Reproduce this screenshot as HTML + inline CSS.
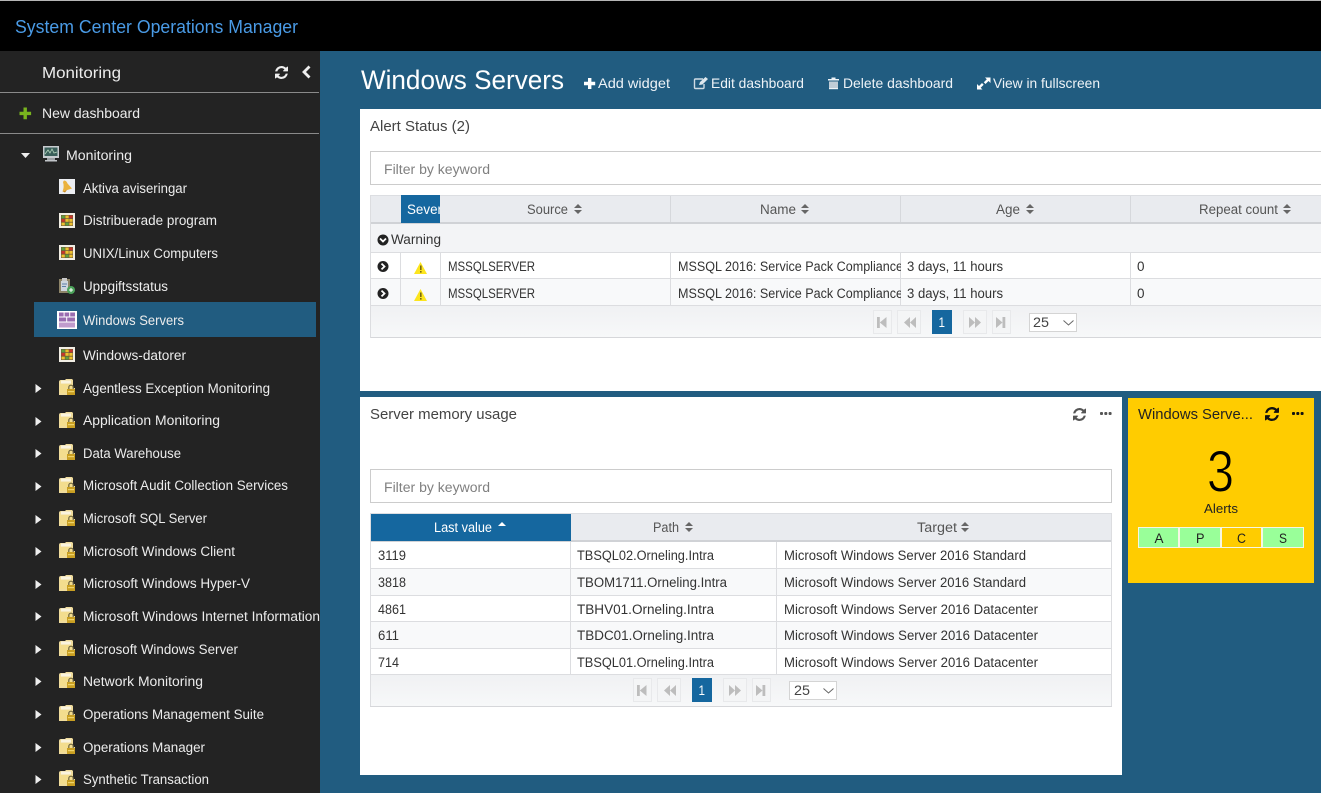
<!DOCTYPE html>
<html lang="en"><head><meta charset="utf-8"><title>System Center Operations Manager</title>
<style>
html,body{margin:0;padding:0;width:1321px;height:793px;overflow:hidden;background:#215c80}
svg{display:block}
text{font-family:"Liberation Sans",sans-serif;font-size:13.5px;fill:#333}
.s text{fill:#ececec}
.h text{fill:#555}
</style></head><body>
<svg xmlns="http://www.w3.org/2000/svg" width="1321" height="793" viewBox="0 0 1321 793">
<defs>
<symbol id="refresh" viewBox="0 0 1536 1536"><path d="M1511 928q0 5-1 7-64 268-268 434.5t-478 166.5q-146 0-282.5-55t-243.5-157l-129 129q-19 19-45 19t-45-19-19-45v-448q0-26 19-45t45-19h448q26 0 45 19t19 45-19 45l-137 137q71 66 161 102t187 36q134 0 250-65t186-179q11-17 53-117 8-23 30-23h192q13 0 22.5 9.5t9.5 22.5zm25-800v448q0 26-19 45t-45 19h-448q-26 0-45-19t-19-45 19-45l138-138q-148-137-349-137-134 0-250 65t-186 179q-11 17-53 117-8 23-30 23h-199q-13 0-22.5-9.5t-9.5-22.5v-7q65-268 270-434.5t480-166.5q146 0 284 55.5t245 156.5l130-129q19-19 45-19t45 19 19 45z"/></symbol>
<g id="grid"><rect x="0" y="0" width="16" height="15" fill="#f1eee4"/>
<rect x="2" y="2" width="12" height="11" fill="#6b5a3a"/>
<rect x="2.500" y="2.500" width="3.300" height="2.800" fill="#5fa03c"/><rect x="6.400" y="2.500" width="3.300" height="2.800" fill="#eec02f"/><rect x="10.300" y="2.500" width="3.300" height="2.800" fill="#c8352c"/>
<rect x="2.500" y="6" width="3.300" height="2.800" fill="#c8352c"/><rect x="6.400" y="6" width="3.300" height="2.800" fill="#eec02f"/><rect x="10.300" y="6" width="3.300" height="2.800" fill="#eec02f"/>
<rect x="2.500" y="9.600" width="3.300" height="2.800" fill="#eec02f"/><rect x="6.400" y="9.600" width="3.300" height="2.800" fill="#5fa03c"/><rect x="10.300" y="9.600" width="3.300" height="2.800" fill="#eec02f"/></g>
<g id="folder"><path d="M0 3Q0 1 2 1H6L7 0H13L14 1V9H16V16H0Z" fill="#f0dc9c"/><path d="M1 5H13V14H1Z" fill="#f3dd8e"/><path d="M2 1.500H12V4.500H2Z" fill="#faf4df"/><rect x="8" y="10" width="8" height="6" fill="#c99f22"/><rect x="9" y="12" width="6" height="1.200" fill="#eed36b"/><path d="M9.800 10V8.400a2.200 2.200 0 0 1 4.400 0V10" fill="none" stroke="#6f6540" stroke-width="1.200"/></g>
<g id="rarrow"><path d="M0 0L6 4.500L0 9Z" fill="#eee"/></g>
<g id="sort"><path d="M0 4L4 0L8 4Z M0 6L4 10L8 6Z" fill="#666"/></g>
<g id="warn"><path d="M6.500 0L13 12H0Z" fill="#fce51e"/><rect x="6" y="3.500" width="1.600" height="4.500" fill="#7a6a10"/><rect x="6" y="9" width="1.600" height="1.600" fill="#7a6a10"/></g>
<g id="cright"><circle cx="5.500" cy="5.500" r="5.500" fill="#222"/><path d="M4 2.600L7 5.500L4 8.400" fill="none" stroke="#fff" stroke-width="1.800"/></g>
<g id="dots"><rect x="0" y="0" width="3" height="3" rx="1"/><rect x="4.300" y="0" width="3" height="3" rx="1"/><rect x="8.600" y="0" width="3" height="3" rx="1"/></g>
<linearGradient id="ft" x1="0" y1="0" x2="0" y2="1"><stop offset="0" stop-color="#f0f1f3"/><stop offset="1" stop-color="#f7f8f9"/></linearGradient>
<g id="pager">
<rect x="-.5" y="1.500" width="18" height="23" fill="#f4f5f6" stroke="#e8e9eb"/><rect x="3" y="8" width="2.800" height="11" fill="#bdbdbd"/><path d="M12.500 8V19L5.800 13.500Z" fill="#bdbdbd"/>
<rect x="23.500" y="1.500" width="23" height="23" fill="#f4f5f6" stroke="#e8e9eb"/><path d="M36 8V19L30 13.500Z M42 8V19L36 13.500Z" fill="#bdbdbd"/>
<rect x="58" y="1" width="20" height="24" fill="#15679f"/>
<rect x="89.500" y="1.500" width="23" height="23" fill="#f4f5f6" stroke="#e8e9eb"/><path d="M95 8V19L101 13.500Z M101 8V19L107 13.500Z" fill="#bdbdbd"/>
<rect x="118.500" y="1.500" width="18" height="23" fill="#f4f5f6" stroke="#e8e9eb"/><path d="M122 8V19L128.500 13.500Z" fill="#bdbdbd"/><rect x="128.500" y="8" width="2.800" height="11" fill="#bdbdbd"/>
<rect x="155.500" y="4.500" width="47" height="18" fill="#fff" stroke="#d4d4d4"/><path d="M189.500 11.500L194.500 16L199.500 11.500" fill="none" stroke="#666" stroke-width="1"/>
</g>
<clipPath id="sidec"><rect x="0" y="0" width="320" height="793"/></clipPath>
<clipPath id="sevc"><rect x="401" y="195" width="39" height="28"/></clipPath>
<clipPath id="namec"><rect x="671" y="253" width="230" height="53"/></clipPath>
</defs>

<!-- Top bar -->
<rect width="1321" height="51" fill="#000"/>
<rect width="1321" height="1" fill="#b5b5b5"/>
<text x="15" y="33" textLength="283" lengthAdjust="spacingAndGlyphs" style="font-size:18px;fill:#4a9be6">System Center Operations Manager</text>

<!-- Sidebar -->
<rect y="51" width="320" height="742" fill="#232323"/>
<g class="s" clip-path="url(#sidec)">
<text x="42" y="78" textLength="79" lengthAdjust="spacingAndGlyphs" style="font-size:16px">Monitoring</text>
<use href="#refresh" x="275" y="66" width="13" height="13" fill="#eee"/>
<path d="M309.500 66.500L304 72L309.500 77.500" fill="none" stroke="#eee" stroke-width="2.800"/>
<rect y="92" width="319" height="1" fill="#8a8a8a"/>
<path d="M23.500 107.500h3.400v4.200h4.200v3.400h-4.200v4.200h-3.400v-4.200h-4v-3.400h4z" fill="#78b41e"/>
<text x="42" y="118" textLength="98" lengthAdjust="spacingAndGlyphs" style="font-size:14px">New dashboard</text>
<rect y="133" width="319" height="1" fill="#8a8a8a"/>

<path d="M21 153H30L25.500 158Z" fill="#eee"/>
<g transform="translate(43,146)"><rect x="0" y="0" width="16" height="12" fill="#c8ccd0"/><rect x="1.500" y="1.500" width="13" height="8.500" fill="#3a5f5a"/><path d="M2 8L5 4L7 7L9 3L11 7L14 6" fill="none" stroke="#b5d6bc" stroke-width=".8"/><rect x="4" y="12" width="8" height="2" fill="#9ca0a4"/><rect x="2" y="14" width="12" height="1.500" fill="#c0c4c8"/></g>
<text x="66" y="160" textLength="66" lengthAdjust="spacingAndGlyphs">Monitoring</text>

<g transform="translate(59,179)"><rect width="16" height="15" fill="#eceef2"/><path d="M5 1.500Q7.500 1.500 8.500 4.500L13 9.500L3.500 12.500Q5.500 8 4 3Z" fill="#eab23e"/><path d="M3.500 12.500L8 11L6 13.500Z" fill="#c98a25"/></g>
<text x="83" y="193" textLength="104" lengthAdjust="spacingAndGlyphs">Aktiva aviseringar</text>

<use href="#grid" x="59" y="213"/>
<text x="83" y="225" textLength="134" lengthAdjust="spacingAndGlyphs">Distribuerade program</text>

<use href="#grid" x="59" y="245"/>
<text x="83" y="258" textLength="135" lengthAdjust="spacingAndGlyphs">UNIX/Linux Computers</text>

<g transform="translate(59,278)"><rect x="0" y="1" width="11" height="14" fill="#8d8468"/><rect x="2" y="3" width="7" height="10" fill="#cfd6de"/><rect x="3" y="0" width="5" height="3" fill="#c9c9c9"/><path d="M3 6H8M3 8.500H7" stroke="#5c7fa8"/><circle cx="12" cy="12" r="4" fill="#4ba25a"/><path d="M10 12H14M12 10V14" stroke="#fff"/></g>
<text x="83" y="291" textLength="85" lengthAdjust="spacingAndGlyphs">Uppgiftsstatus</text>

<rect x="34" y="302" width="282" height="35" fill="#215c80"/>
<g transform="translate(57,311)"><rect width="20" height="18" fill="#fff"/><rect x="2" y="1.500" width="4.600" height="4" fill="#9a6cb0"/><rect x="7.600" y="1.500" width="4.600" height="4" fill="#9a6cb0"/><rect x="13.200" y="1.500" width="4.800" height="4" fill="#9a6cb0"/><rect x="2" y="6.500" width="7.200" height="4" fill="#9a6cb0"/><rect x="10.200" y="6.500" width="7.800" height="4" fill="#9a6cb0"/><rect x="2" y="11.500" width="16" height="5" fill="#c09ccd"/></g>
<text x="83" y="325" textLength="101" lengthAdjust="spacingAndGlyphs">Windows Servers</text>

<use href="#grid" x="59" y="347"/>
<text x="83" y="360" textLength="103" lengthAdjust="spacingAndGlyphs">Windows-datorer</text>

<use href="#rarrow" x="35.500" y="384"/><use href="#folder" x="59" y="379"/>
<text x="83" y="393" textLength="187" lengthAdjust="spacingAndGlyphs">Agentless Exception Monitoring</text>
<use href="#rarrow" x="35.500" y="417"/><use href="#folder" x="59" y="412"/>
<text x="83" y="425" textLength="137" lengthAdjust="spacingAndGlyphs">Application Monitoring</text>
<use href="#rarrow" x="35.500" y="449"/><use href="#folder" x="59" y="444"/>
<text x="83" y="458" textLength="98" lengthAdjust="spacingAndGlyphs">Data Warehouse</text>
<use href="#rarrow" x="35.500" y="482"/><use href="#folder" x="59" y="477"/>
<text x="83" y="490" textLength="205" lengthAdjust="spacingAndGlyphs">Microsoft Audit Collection Services</text>
<use href="#rarrow" x="35.500" y="515"/><use href="#folder" x="59" y="510"/>
<text x="83" y="523" textLength="124" lengthAdjust="spacingAndGlyphs">Microsoft SQL Server</text>
<use href="#rarrow" x="35.500" y="547"/><use href="#folder" x="59" y="542"/>
<text x="83" y="556" textLength="152" lengthAdjust="spacingAndGlyphs">Microsoft Windows Client</text>
<use href="#rarrow" x="35.500" y="580"/><use href="#folder" x="59" y="575"/>
<text x="83" y="588" textLength="167" lengthAdjust="spacingAndGlyphs">Microsoft Windows Hyper-V</text>
<use href="#rarrow" x="35.500" y="612"/><use href="#folder" x="59" y="607"/>
<text x="83" y="621" textLength="237" lengthAdjust="spacingAndGlyphs">Microsoft Windows Internet Information</text>
<use href="#rarrow" x="35.500" y="645"/><use href="#folder" x="59" y="640"/>
<text x="83" y="654" textLength="155" lengthAdjust="spacingAndGlyphs">Microsoft Windows Server</text>
<use href="#rarrow" x="35.500" y="677"/><use href="#folder" x="59" y="672"/>
<text x="83" y="686" textLength="120" lengthAdjust="spacingAndGlyphs">Network Monitoring</text>
<use href="#rarrow" x="35.500" y="710"/><use href="#folder" x="59" y="705"/>
<text x="83" y="719" textLength="181" lengthAdjust="spacingAndGlyphs">Operations Management Suite</text>
<use href="#rarrow" x="35.500" y="743"/><use href="#folder" x="59" y="738"/>
<text x="83" y="752" textLength="122" lengthAdjust="spacingAndGlyphs">Operations Manager</text>
<use href="#rarrow" x="35.500" y="775"/><use href="#folder" x="59" y="770"/>
<text x="83" y="784" textLength="126" lengthAdjust="spacingAndGlyphs">Synthetic Transaction</text>
</g>

<!-- Header -->
<text x="361" y="89" textLength="203" lengthAdjust="spacingAndGlyphs" style="font-size:27px;fill:#fff">Windows Servers</text>
<path d="M588 78h3.400v3.800h3.800v3.400h-3.800v3.800H588v-3.800h-4v-3.400h4z" fill="#fff"/>
<text x="598" y="88" textLength="72" lengthAdjust="spacingAndGlyphs" style="font-size:14px;fill:#eef3f7">Add widget</text>
<path d="M703 79H695.500A1 1 0 0 0 694.500 80V87.500A1 1 0 0 0 695.500 88.500H703A1 1 0 0 0 704 87.500V84" fill="none" stroke="#cfdbe4" stroke-width="1.400"/><path d="M699 85L700 82L705.500 77L708 79L702.500 84.500Z" fill="#dfe8ee"/>
<text x="711" y="88" textLength="93" lengthAdjust="spacingAndGlyphs" style="font-size:14px;fill:#eef3f7">Edit dashboard</text>
<path d="M828 79H839V80.500H828Z M831.500 79V77.500H835.500V79Z" fill="#eef3f7"/><rect x="829" y="81.500" width="9" height="7.500" fill="#c0ccd6"/><rect x="829" y="88" width="9" height="1.200" fill="#eef3f7"/>
<text x="843" y="88" textLength="110" lengthAdjust="spacingAndGlyphs" style="font-size:14px;fill:#eef3f7">Delete dashboard</text>
<path d="M985 77.500H990.500V83L988.500 81L985.500 84L983.800 82.300L986.800 79.300Z M977 89.500V84L979 86L982 83L983.700 84.700L980.700 87.700L982.500 89.500Z" fill="#fff"/>
<text x="993" y="88" textLength="107" lengthAdjust="spacingAndGlyphs" style="font-size:14px;fill:#eef3f7">View in fullscreen</text>

<!-- Alert panel -->
<rect x="360" y="109" width="961" height="282" fill="#fff"/>
<text x="370" y="131" textLength="100" lengthAdjust="spacingAndGlyphs" style="font-size:15px;fill:#444">Alert Status (2)</text>
<rect x="370.500" y="151.500" width="960" height="33" fill="#fff" stroke="#ccc"/>
<text x="384" y="174" textLength="106" lengthAdjust="spacingAndGlyphs" style="fill:#808080">Filter by keyword</text>

<rect x="370" y="195" width="951" height="143" fill="#fff"/>
<rect x="370" y="195" width="951" height="28" fill="#e9ebef"/>
<rect x="370" y="195" width="951" height="1" fill="#dcdee2"/>
<rect x="370" y="222" width="951" height="2" fill="#d0d2d6"/>
<rect x="401" y="195" width="39" height="28" fill="#15679f"/>
<path d="M670.500 196V222M900.500 196V222M1130.500 196V222" stroke="#d6d8dc"/>
<text x="407" y="214" textLength="35" lengthAdjust="spacingAndGlyphs" clip-path="url(#sevc)" style="fill:#fff">Sever</text>
<g class="h">
<text x="527" y="214" textLength="41" lengthAdjust="spacingAndGlyphs">Source</text>
<text x="760" y="214" textLength="36" lengthAdjust="spacingAndGlyphs">Name</text>
<text x="996" y="214" textLength="24" lengthAdjust="spacingAndGlyphs">Age</text>
<text x="1199" y="214" textLength="79" lengthAdjust="spacingAndGlyphs">Repeat count</text>
</g>
<use href="#sort" x="574" y="204"/><use href="#sort" x="801" y="204"/><use href="#sort" x="1026" y="204"/><use href="#sort" x="1283" y="204"/>

<rect x="370" y="224" width="951" height="28" fill="#f3f4f6"/>
<circle cx="383" cy="240" r="5.500" fill="#222"/><path d="M380 238.500L383 241.500L386 238.500" fill="none" stroke="#fff" stroke-width="1.800"/>
<text x="391" y="244" textLength="50" lengthAdjust="spacingAndGlyphs">Warning</text>
<rect x="370" y="252" width="951" height="1" fill="#dcdde0"/>
<rect x="370" y="253" width="951" height="25" fill="#fff"/>
<rect x="370" y="278" width="951" height="1" fill="#dcdde0"/>
<rect x="370" y="279" width="951" height="26" fill="#f8f9fa"/>
<path d="M400.500 253V305M440.500 253V305M670.500 253V305M900.500 253V305M1130.500 253V305" stroke="#dcdde0"/>
<use href="#cright" x="377.500" y="261"/><use href="#cright" x="377.500" y="288"/>
<use href="#warn" x="414" y="262"/><use href="#warn" x="414" y="289"/>
<text x="448" y="271" textLength="87" lengthAdjust="spacingAndGlyphs">MSSQLSERVER</text>
<text x="448" y="298" textLength="87" lengthAdjust="spacingAndGlyphs">MSSQLSERVER</text>
<g clip-path="url(#namec)">
<text x="678" y="271" textLength="225" lengthAdjust="spacingAndGlyphs">MSSQL 2016: Service Pack Compliance</text>
<text x="678" y="298" textLength="225" lengthAdjust="spacingAndGlyphs">MSSQL 2016: Service Pack Compliance</text>
</g>
<text x="907" y="271" textLength="96" lengthAdjust="spacingAndGlyphs">3 days, 11 hours</text>
<text x="907" y="298" textLength="96" lengthAdjust="spacingAndGlyphs">3 days, 11 hours</text>
<text x="1137" y="271" textLength="7.500" lengthAdjust="spacingAndGlyphs">0</text>
<text x="1137" y="298" textLength="7.500" lengthAdjust="spacingAndGlyphs">0</text>
<rect x="370" y="305" width="951" height="1" fill="#dcdde0"/>
<rect x="370" y="306" width="951" height="31" fill="url(#ft)"/>
<rect x="370" y="337" width="951" height="1" fill="#d6d7da"/>
<rect x="370" y="195" width="1" height="143" fill="#dcdde0"/>
<use href="#pager" x="874" y="309"/>
<text x="938.500" y="327" textLength="6.500" lengthAdjust="spacingAndGlyphs" style="fill:#fff">1</text>
<text x="1033" y="327" textLength="16" lengthAdjust="spacingAndGlyphs" style="fill:#444">25</text>

<!-- Memory panel -->
<rect x="360" y="397" width="762" height="378" fill="#fff"/>
<text x="370" y="419" textLength="147" lengthAdjust="spacingAndGlyphs" style="font-size:15px;fill:#444">Server memory usage</text>
<use href="#refresh" x="1073" y="408" width="13" height="13" fill="#555"/>
<use href="#dots" x="1100" y="412" fill="#555"/>
<rect x="370.500" y="469.500" width="741" height="33" fill="#fff" stroke="#ccc"/>
<text x="384" y="492" textLength="106" lengthAdjust="spacingAndGlyphs" style="fill:#808080">Filter by keyword</text>

<rect x="370" y="513" width="742" height="28" fill="#e9ebef"/>
<rect x="370" y="513" width="742" height="1" fill="#dcdee2"/>
<rect x="370" y="540" width="742" height="2" fill="#d0d2d6"/>
<rect x="371" y="514" width="200" height="27" fill="#15679f"/>
<text x="434" y="532" textLength="58" lengthAdjust="spacingAndGlyphs" style="fill:#fff">Last value</text>
<path d="M498 526L502 522L506 526Z" fill="#fff"/>
<g class="h">
<text x="653" y="532" textLength="26" lengthAdjust="spacingAndGlyphs">Path</text>
<text x="917" y="532" textLength="40" lengthAdjust="spacingAndGlyphs">Target</text>
</g>
<use href="#sort" x="685" y="522"/><use href="#sort" x="961" y="522"/>

<rect x="370" y="569" width="742" height="26" fill="#f8f9fa"/>
<rect x="370" y="622" width="742" height="26" fill="#f8f9fa"/>
<path d="M370 568.500H1112M370 595.500H1112M370 621.500H1112M370 648.500H1112M370 674.500H1112" stroke="#dcdde0"/>
<path d="M570.500 542V674M776.500 542V674M370.500 513V706M1111.500 513V706" stroke="#dcdde0"/>

<text x="378" y="560" textLength="28" lengthAdjust="spacingAndGlyphs">3119</text>
<text x="577" y="560" textLength="137" lengthAdjust="spacingAndGlyphs">TBSQL02.Orneling.Intra</text>
<text x="784" y="560" textLength="242" lengthAdjust="spacingAndGlyphs">Microsoft Windows Server 2016 Standard</text>
<text x="378" y="587" textLength="28" lengthAdjust="spacingAndGlyphs">3818</text>
<text x="577" y="587" textLength="150" lengthAdjust="spacingAndGlyphs">TBOM1711.Orneling.Intra</text>
<text x="784" y="587" textLength="242" lengthAdjust="spacingAndGlyphs">Microsoft Windows Server 2016 Standard</text>
<text x="378" y="614" textLength="28" lengthAdjust="spacingAndGlyphs">4861</text>
<text x="577" y="614" textLength="137" lengthAdjust="spacingAndGlyphs">TBHV01.Orneling.Intra</text>
<text x="784" y="614" textLength="254" lengthAdjust="spacingAndGlyphs">Microsoft Windows Server 2016 Datacenter</text>
<text x="378" y="640" textLength="21" lengthAdjust="spacingAndGlyphs">611</text>
<text x="577" y="640" textLength="137" lengthAdjust="spacingAndGlyphs">TBDC01.Orneling.Intra</text>
<text x="784" y="640" textLength="254" lengthAdjust="spacingAndGlyphs">Microsoft Windows Server 2016 Datacenter</text>
<text x="378" y="667" textLength="21" lengthAdjust="spacingAndGlyphs">714</text>
<text x="577" y="667" textLength="137" lengthAdjust="spacingAndGlyphs">TBSQL01.Orneling.Intra</text>
<text x="784" y="667" textLength="254" lengthAdjust="spacingAndGlyphs">Microsoft Windows Server 2016 Datacenter</text>

<rect x="371" y="675" width="740" height="31" fill="url(#ft)"/>
<rect x="370" y="706" width="742" height="1" fill="#d6d7da"/>
<use href="#pager" x="634" y="677"/>
<text x="698.500" y="695" textLength="6.500" lengthAdjust="spacingAndGlyphs" style="fill:#fff">1</text>
<text x="794" y="695" textLength="16" lengthAdjust="spacingAndGlyphs" style="fill:#444">25</text>

<!-- Yellow widget -->
<rect x="1128" y="398" width="186" height="185" fill="#ffcc00"/>
<text x="1138" y="419" textLength="115" lengthAdjust="spacingAndGlyphs" style="font-size:15px;fill:#222">Windows Serve...</text>
<use href="#refresh" x="1265" y="407" width="14" height="14" fill="#111"/>
<use href="#dots" x="1292" y="412" fill="#111"/>
<text x="1207" y="491.500" textLength="27" lengthAdjust="spacingAndGlyphs" style="font-size:58px;fill:#000;stroke:#ffcc00;stroke-width:1px">3</text>
<text x="1204" y="513" textLength="34" lengthAdjust="spacingAndGlyphs" style="font-size:13px;fill:#222">Alerts</text>
<rect x="1138.500" y="527.500" width="40" height="20" fill="#99ff99" stroke="#f6f6e4"/>
<rect x="1179.500" y="527.500" width="41" height="20" fill="#99ff99" stroke="#f6f6e4"/>
<rect x="1221.500" y="527.500" width="40" height="20" fill="#ffcc00" stroke="#f6f6e4"/>
<rect x="1262.500" y="527.500" width="41" height="20" fill="#99ff99" stroke="#f6f6e4"/>
<text x="1154.500" y="543" textLength="9" lengthAdjust="spacingAndGlyphs" style="fill:#222">A</text>
<text x="1196" y="543" textLength="8.500" lengthAdjust="spacingAndGlyphs" style="fill:#222">P</text>
<text x="1237" y="543" textLength="9" lengthAdjust="spacingAndGlyphs" style="fill:#222">C</text>
<text x="1279" y="543" textLength="8" lengthAdjust="spacingAndGlyphs" style="fill:#222">S</text>
</svg>
</body></html>
